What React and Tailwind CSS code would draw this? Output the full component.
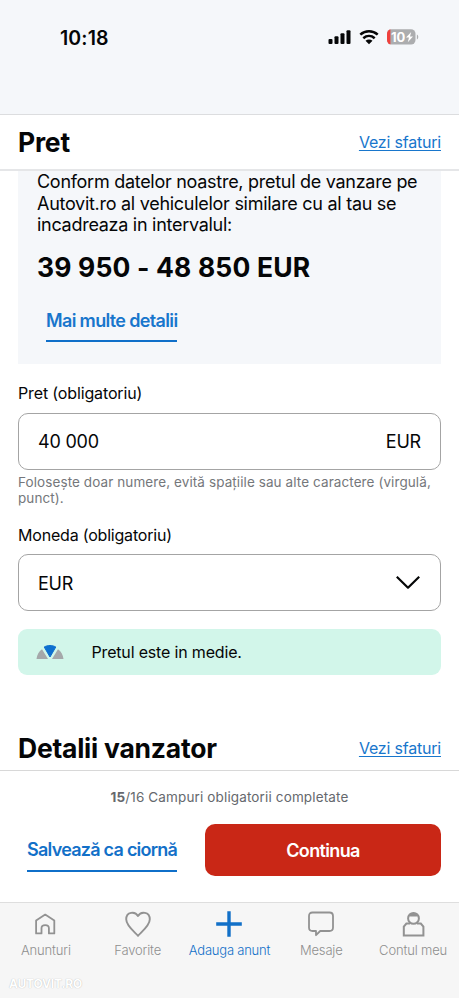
import { clsx } from "clsx";

const tabs = [
  { id: "home", label: "Anunturi", icon: HomeIcon },
  { id: "favorites", label: "Favorite", icon: HeartIcon },
  { id: "add", label: "Adauga anunt", icon: PlusIcon, active: true },
  { id: "messages", label: "Mesaje", icon: MessageIcon },
  { id: "account", label: "Contul meu", icon: UserIcon }
];

function HomeIcon() {
  return (
    <svg className="size-7" viewBox="0 0 28 28" fill="none" stroke="currentColor" strokeWidth="1.8">
      <path d="M4.1 23.4V10.6L13.2 4.6l9.1 6v12.8h-5.4v-5.2c0-4.2-7.4-4.2-7.4 0v5.2z" strokeLinejoin="round" />
    </svg>
  );
}

function HeartIcon() {
  return (
    <svg className="size-7" viewBox="0 0 28 28" fill="none" stroke="currentColor" strokeWidth="1.9">
      <path d="M14 25.8C11.5 22.8 2.2 16 2.2 9.3c0-7.8 9-8.3 11.8-3.3 2.8-5 11.8-4.500 11.8 3.3 0 6.7-9.3 13.5-11.8 16.500z" strokeLinejoin="round" />
    </svg>
  );
}

function PlusIcon() {
  return (
    <svg className="size-7" viewBox="0 0 28 28" fill="none" stroke="currentColor" strokeWidth="3.4">
      <path d="M14 1.2v25.6M1.2 14h25.6" />
    </svg>
  );
}

function MessageIcon() {
  return (
    <svg className="size-7" viewBox="0 0 28 28" fill="none" stroke="currentColor" strokeWidth="1.8" strokeLinejoin="round">
      <path d="M5.5 2.5h17q3.5 0 3.5 3.5v11.5q0 3.5-3.5 3.5h-9.3l-4.2 4.2V21H5.5q-3.5 0-3.5-3.5V6Q2 2.500 5.5 2.500z" />
    </svg>
  );
}

function UserIcon() {
  return (
    <svg className="size-7" viewBox="0 0 28 28" fill="none" stroke="currentColor" strokeWidth="2">
      <circle cx="14.5" cy="8.4" r="5.4" />
      <path d="M11 13.5H7.4l-2.600 3.200v8.700h19.600v-8.700l-2.600-3.200H18" />
      <path d="M9.300 6C11 1.500 18 1.500 19.700 6l-2.200.4h-6z" fill="currentColor" stroke="none" />
    </svg>
  );
}

function StatusBar() {
  return (
    <header className="flex h-[115px] shrink-0 items-start justify-between border-b border-[#dcdddf] bg-[#f5f7fa] pr-[40px] pl-[60px]">
      <span className="pt-[24px] text-[19.5px] leading-[28px] font-semibold tracking-[0.1px]">10:18</span>
      <div className="flex items-center gap-2 pt-[29px]">
        <svg className="h-4 w-6" viewBox="0 0 24 16" fill="currentColor">
          <rect x="1.5" y="10" width="4" height="5" rx="1.1" />
          <rect x="7.5" y="7.2" width="4" height="7.8" rx="1.1" />
          <rect x="13.5" y="4.2" width="4" height="10.8" rx="1.1" />
          <rect x="19.5" y="1.2" width="4" height="13.8" rx="1.1" />
        </svg>
        <svg className="h-4 w-5" viewBox="0 0 20 16" fill="none" stroke="currentColor" strokeWidth="2.6">
          <path d="M1.3 5.6C6.3 1.1 13.7 1.1 18.7 5.6" />
          <path d="M4.3 9.2c3.4-2.9 8-2.9 11.4 0" />
          <path d="M6.5 11.7c2-1.7 5-1.7 7 0L10 15.2z" fill="currentColor" stroke="none" />
        </svg>
        <svg className="h-4 w-8" viewBox="0 0 32 16">
          <defs>
            <clipPath id="battery">
              <rect x="0" y="0.2" width="28.5" height="15.3" rx="4.5" />
            </clipPath>
          </defs>
          <rect width="29" height="16" fill="#acadaf" clipPath="url(#battery)" />
          <rect width="3.4" height="16" fill="#f0403c" clipPath="url(#battery)" />
          <path d="M29.9 5.5c1.8.8 1.8 4.2 0 5z" fill="#acadaf" />
          <text x="3.9" y="12.7" fill="#fff" fontSize="13" fontWeight="700" letterSpacing="-0.1">10</text>
          <path d="M24.2 2.9l-5.2 5.7h3l-1.2 4.7 5.2-5.9h-3z" fill="#fff" />
        </svg>
      </div>
    </header>
  );
}

function SectionHeading({ title, className }) {
  return (
    <div className={clsx("flex items-center justify-between px-[18px]", className)}>
      <h2 className="text-[26.5px] leading-8 font-bold tracking-[-0.24px]">{title}</h2>
      <a className="text-[16px] leading-5 tracking-[-0.2px] text-[#1876cc] underline underline-offset-2">Vezi sfaturi</a>
    </div>
  );
}

function PriceEstimate() {
  return (
    <section className="mx-[18px] h-[193px] shrink-0 bg-[#f5f7fa] pl-[19px]">
      <p className="text-[18px] leading-[21.6px] tracking-[-0.28px] whitespace-nowrap">
        Conform datelor noastre, pretul de vanzare pe
        <br />
        Autovit.ro al vehiculelor similare cu al tau se
        <br />
        incadreaza in intervalul:
      </p>
      <p className="mt-[15px] text-[26.5px] leading-8 font-bold tracking-[0.16px]">39 950 - 48 850 EUR</p>
      <a className="mt-[27px] ml-[9px] inline-block border-b-2 border-[#0f6fc9] pb-2 text-[18px] leading-[22px] font-semibold tracking-[-0.65px] text-[#1876cc]">
        Mai multe detalii
      </a>
    </section>
  );
}

function PriceForm() {
  return (
    <div className="px-[18px]">
      <div className="mt-[19px] text-[16px] leading-5 tracking-[-0.14px]">Pret (obligatoriu)</div>
      <div className="mt-[10px] flex h-[57px] items-center justify-between rounded-[10px] border border-[#a4a4a4] px-[19px] text-[18px] tracking-[-0.2px]">
        <span>40 000</span>
        <span>EUR</span>
      </div>
      <p className="mt-1 text-[13.5px] leading-4 tracking-[0.09px] whitespace-nowrap text-[#75777b]">
        Folosește doar numere, evită spațiile sau alte caractere (virgulă,
        <br />
        punct).
      </p>
      <div className="mt-[19px] text-[16px] leading-5 tracking-[-0.2px]">Moneda (obligatoriu)</div>
      <div className="mt-[9px] flex h-[57px] items-center justify-between rounded-[10px] border border-[#a4a4a4] px-[19px] text-[18px] tracking-[-0.2px]">
        <span className="pt-px">EUR</span>
        <svg className="h-4 w-[26px]" viewBox="0 0 26 16" fill="none" stroke="currentColor" strokeWidth="2.2">
          <path d="M1.8 1.7L13 12.7 24.2 1.7" strokeLinejoin="round" />
        </svg>
      </div>
      <div className="mt-[18px] flex h-[46px] items-center rounded-[9px] bg-[#d2f6ea] pl-[18px]">
        <svg className="h-4 w-7" viewBox="0 0 28 16">
          <path d="M.5 15C1 10.7 3 7.500 6 5.300L12 15zM27.5 15C27 10.7 25 7.500 22 5.300L16 15z" fill="#a5a8aa" />
          <path d="M8.2 3c3.6-2 8-2 11.6 0L14 13z" fill="#0e70cf" stroke="#0e70cf" strokeLinejoin="round" />
        </svg>
        <span className="ml-[27.5px] text-[16px] tracking-[-0.17px]">Pretul este in medie.</span>
      </div>
    </div>
  );
}

function ActionBar() {
  return (
    <section className="h-[132px] shrink-0 border-t border-[#d8d8d8] bg-white px-[18px] pt-4">
      <p className="text-center text-[13.5px] leading-5 tracking-[0.14px] text-[#65686d]">
        <b>15</b>/16 Campuri obligatorii completate
      </p>
      <div className="mt-[17px] flex justify-between">
        <button className="mt-[15px] ml-[9px] h-[33px] border-b-2 border-[#0f6fc9] pb-[9px] text-[18px] leading-[22px] font-semibold tracking-[-0.75px] whitespace-nowrap text-[#1270c8]">
          Salvează ca ciornă
        </button>
        <button className="h-[52px] w-[236px] rounded-[10px] bg-[#c92716] text-[18px] font-semibold tracking-[-0.65px] text-white">
          Continua
        </button>
      </div>
    </section>
  );
}

function TabBar() {
  return (
    <nav className="relative grid h-24 shrink-0 grid-cols-5 border-t border-[#dedede] bg-[#f6f6f6] pt-[7px]">
      {tabs.map(({ id, label, icon: Icon, active }) => (
        <div
          key={id}
          className={clsx("flex flex-col items-center", active ? "text-[#1270c8]" : "text-[#929292]")}
        >
          <Icon />
          <span
            className={clsx(
              "mt-[3px] text-[13px] leading-[18px] font-light whitespace-nowrap",
              active ? "tracking-[-0.22px] text-[#1270c8]" : "tracking-[-0.16px] text-[#8f8f8f]"
            )}
          >
            {label}
          </span>
        </div>
      ))}
      <span className="absolute top-[73px] left-[9px] text-[12px] leading-4 font-bold tracking-[-0.2px] text-white [text-shadow:0_0_1px_#aaa]">
        AUTOVIT.RO
      </span>
    </nav>
  );
}

export default function App() {
  return (
    <main className="flex h-[998px] w-[459px] flex-col overflow-hidden bg-white font-['Inter',sans-serif] text-[#050607]">
      <StatusBar />
      <SectionHeading title="Pret" className="h-[56px] shrink-0 border-b-2 border-[#e5e6e8]" />
      <PriceEstimate />
      <PriceForm />
      <SectionHeading title="Detalii vanzator" className="mt-auto h-[45px] shrink-0" />
      <ActionBar />
      <TabBar />
    </main>
  );
}
